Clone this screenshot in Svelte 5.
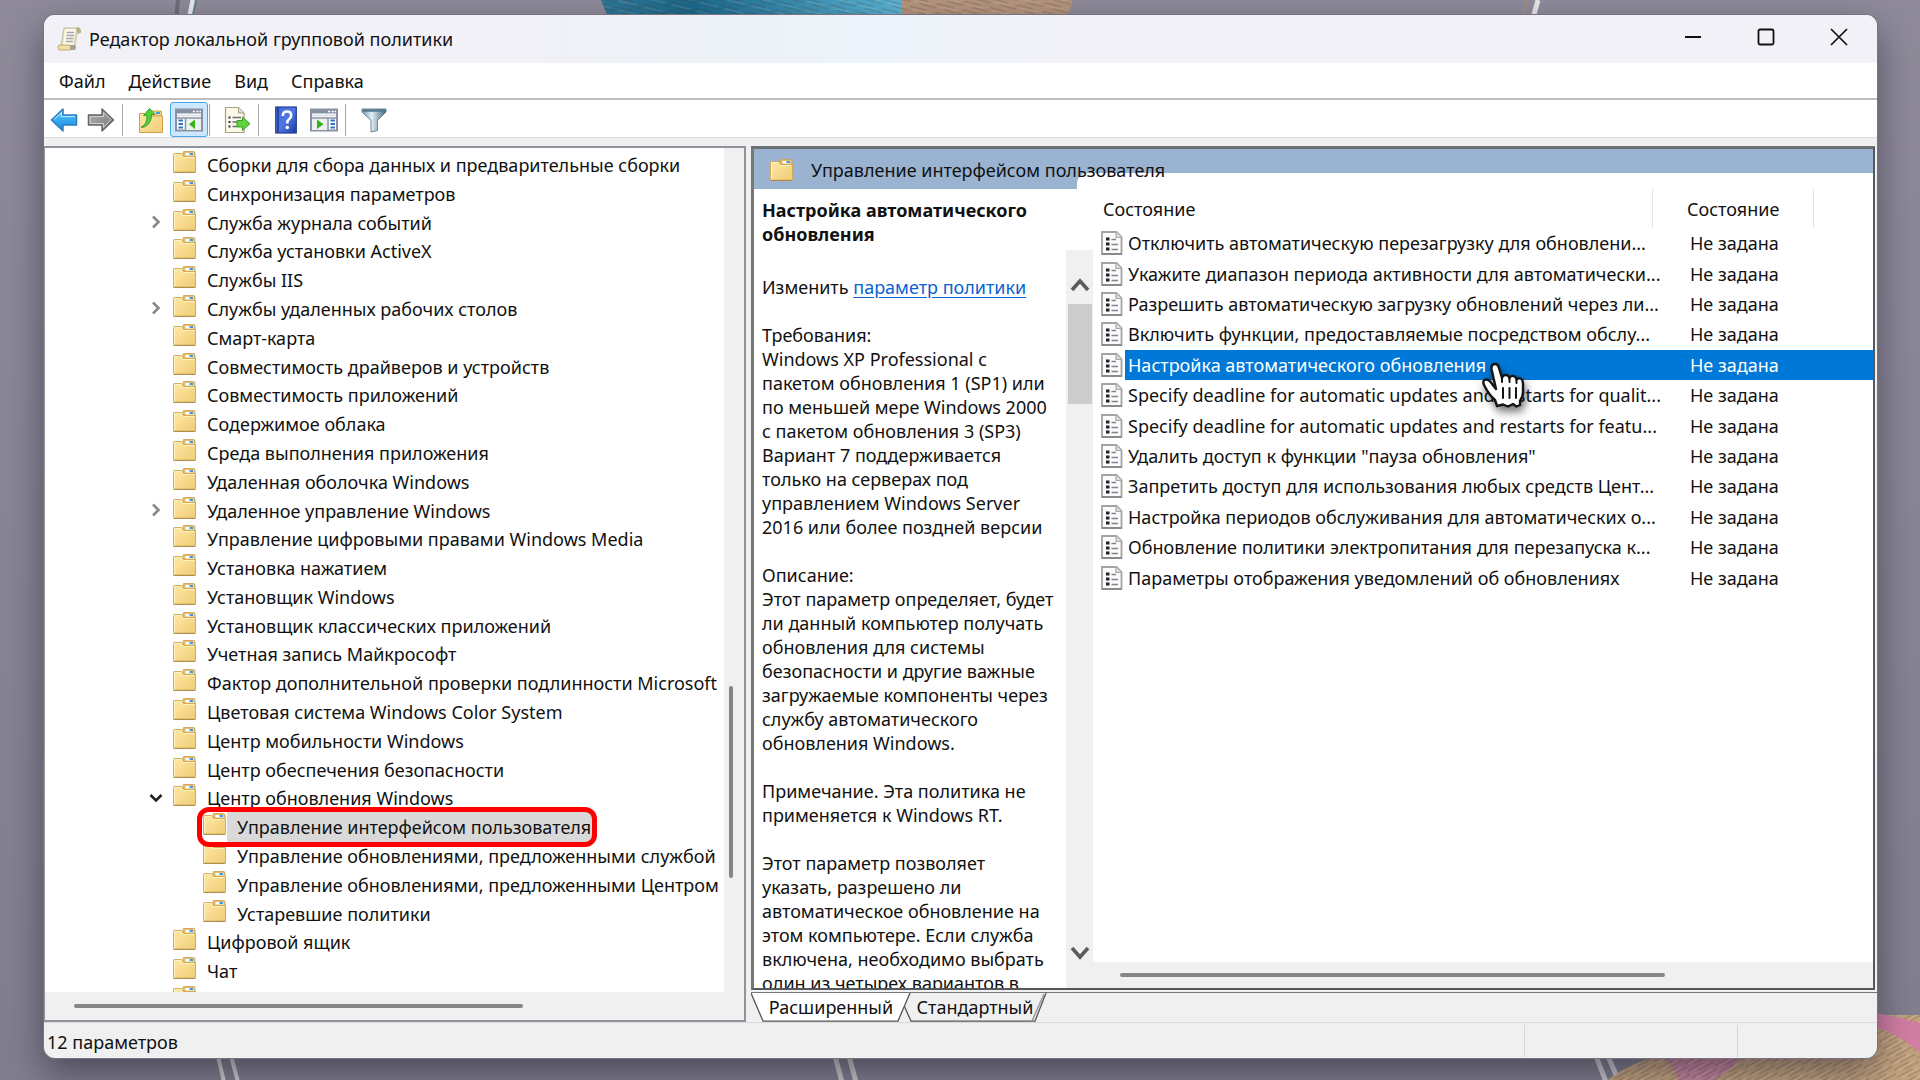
<script>
  const tree = [
    { name: 'Сборки для сбора данных и предварительные сборки' },
    { name: 'Синхронизация параметров' },
    { name: 'Служба журнала событий', state: 'closed' },
    { name: 'Служба установки ActiveX' },
    { name: 'Службы IIS' },
    { name: 'Службы удаленных рабочих столов', state: 'closed' },
    { name: 'Смарт-карта' },
    { name: 'Совместимость драйверов и устройств' },
    { name: 'Совместимость приложений' },
    { name: 'Содержимое облака' },
    { name: 'Среда выполнения приложения' },
    { name: 'Удаленная оболочка Windows' },
    { name: 'Удаленное управление Windows', state: 'closed' },
    { name: 'Управление цифровыми правами Windows Media' },
    { name: 'Установка нажатием' },
    { name: 'Установщик Windows' },
    { name: 'Установщик классических приложений' },
    { name: 'Учетная запись Майкрософт' },
    { name: 'Фактор дополнительной проверки подлинности Microsoft' },
    { name: 'Цветовая система Windows Color System' },
    { name: 'Центр мобильности Windows' },
    { name: 'Центр обеспечения безопасности' },
    { name: 'Центр обновления Windows', state: 'open' },
    { name: 'Управление интерфейсом пользователя', child: true, selected: true },
    { name: 'Управление обновлениями, предложенными службой', child: true },
    { name: 'Управление обновлениями, предложенными Центром', child: true },
    { name: 'Устаревшие политики', child: true },
    { name: 'Цифровой ящик' },
    { name: 'Чат' },
    { name: '' }
  ];

  const policies = [
    'Отключить автоматическую перезагрузку для обновлени...',
    'Укажите диапазон периода активности для автоматически...',
    'Разрешить автоматическую загрузку обновлений через ли...',
    'Включить функции, предоставляемые посредством обслу...',
    'Настройка автоматического обновления',
    'Specify deadline for automatic updates and restarts for qualit...',
    'Specify deadline for automatic updates and restarts for featu...',
    'Удалить доступ к функции "пауза обновления"',
    'Запретить доступ для использования любых средств Цент...',
    'Настройка периодов обслуживания для автоматических о...',
    'Обновление политики электропитания для перезапуска к...',
    'Параметры отображения уведомлений об обновлениях'
  ];
  let selected = $state(4);

  const details = `Требования:
Windows XP Professional с
пакетом обновления 1 (SP1) или
по меньшей мере Windows 2000
с пакетом обновления 3 (SP3)
Вариант 7 поддерживается
только на серверах под
управлением Windows Server
2016 или более поздней версии

Описание:
Этот параметр определяет, будет
ли данный компьютер получать
обновления для системы
безопасности и другие важные
загружаемые компоненты через
службу автоматического
обновления Windows.

Примечание. Эта политика не
применяется к Windows RT.

Этот параметр позволяет
указать, разрешено ли
автоматическое обновление на
этом компьютере. Если служба
включена, необходимо выбрать
один из четырех вариантов в`;
</script>

{#snippet folder()}
  <svg class="folder" viewBox="0 0 23 22" aria-hidden="true">
    <path d="M10 5V1.5Q10 .5 11 .5H20.500Q22 .5 22 2V20H10Z" fill="#e5bd68" stroke="#c99f4d" stroke-width=".8" />
    <rect x="12.500" y="2" width="8" height="2.500" fill="#fff" />
    <rect x="16.500" y="2" width="3.500" height="2" fill="#3f9be6" />
    <path d="M.5 3.500Q.5 2.500 1.500 2.500H8.500L10.500 5.500H22.500V20.500Q22.500 21.500 21.500 21.500H1.500Q.5 21.500 .5 20.500Z" fill="url(#folderFill)" stroke="#cda658" stroke-width=".9" />
    <path d="M1.500 20.500V4L2 3.500H8L10 6.500H21.500" fill="none" stroke="#fff3bd" stroke-width="1" />
    <path d="M.5 21.300H22.300" stroke="#a98545" stroke-width="1" />
  </svg>
{/snippet}

{#snippet consoleIcon(flip)}
  <svg width="28" height="24" viewBox="0 0 28 24" aria-hidden="true">
    <rect x="1" y="1.500" width="26" height="21" fill="#fff" stroke="#8992a3" stroke-width="2" />
    <rect x="1" y="1.500" width="26" height="4" fill="#8992a3" />
    <path d="M18 3.500h2M21.500 3.500h2M24.500 3.500h1.500" stroke="#fff" stroke-width="1.500" />
    <path d="M2 7.500H26" stroke="#d7dbe3" stroke-width="1.500" />
    <path d="M1 10H27" stroke="#8992a3" stroke-width="1.500" />
    {#if flip}
      <rect x="2" y="11" width="15" height="11" fill="#eef1f0" />
      <path d="M18 10V22" stroke="#8992a3" stroke-width="1.500" />
      <path d="M20.500 12.500h4.500M20.500 16h4.500M20.500 19.500h4.500" stroke="#3275c4" stroke-width="1.800" />
      <path d="M7 11.500L13.500 16.300L7 21Z" fill="#32b516" />
    {:else}
      <rect x="11" y="11" width="15" height="11" fill="#eef1f0" />
      <path d="M10.500 10V22" stroke="#8992a3" stroke-width="1.500" />
      <path d="M3.500 12.500h4.500M3.500 16h4.500M3.500 19.500h4.500" stroke="#3275c4" stroke-width="1.800" />
      <path d="M20 11.500L14 16.300L20 21Z" fill="#32b516" />
    {/if}
  </svg>
{/snippet}

<svg class="defs" aria-hidden="true">
  <defs>
    <linearGradient id="folderFill" x1="0" y1="0" x2="1" y2="1">
      <stop offset="0" stop-color="#ffe9a6" />
      <stop offset="1" stop-color="#efcb76" />
    </linearGradient>
    <linearGradient id="blueFill" x1="0" y1="0" x2="0" y2="1">
      <stop offset="0" stop-color="#7fd4fb" />
      <stop offset=".5" stop-color="#35aaf0" />
      <stop offset="1" stop-color="#1787d8" />
    </linearGradient>
    <linearGradient id="grayFill" x1="0" y1="0" x2="1" y2="1">
      <stop offset="0" stop-color="#b5b5b5" />
      <stop offset="1" stop-color="#777" />
    </linearGradient>
    <linearGradient id="helpFill" x1="0" y1="0" x2="1" y2="1">
      <stop offset="0" stop-color="#3f66dd" />
      <stop offset=".5" stop-color="#4f79e4" />
      <stop offset="1" stop-color="#1d3aa8" />
    </linearGradient>
    <linearGradient id="funnelFill" x1="0" y1="0" x2="1" y2="0">
      <stop offset="0" stop-color="#6b93ad" />
      <stop offset=".4" stop-color="#e3eff6" />
      <stop offset="1" stop-color="#3f637e" />
    </linearGradient>
  </defs>
</svg>

<div class="desktop">
  <svg class="wallpaper" viewBox="0 0 1920 1080" preserveAspectRatio="none" aria-hidden="true">
    <defs>
      <linearGradient id="wall" x1="0" y1="0" x2="0" y2="1">
        <stop offset="0" stop-color="#8f8b9b" />
        <stop offset="1" stop-color="#817e8d" />
      </linearGradient>
      <linearGradient id="blueWood" x1="0" y1="0" x2="1" y2="0">
        <stop offset="0" stop-color="#2f7896" />
        <stop offset=".3" stop-color="#1a6a8c" />
        <stop offset="1" stop-color="#5cb6d6" />
      </linearGradient>
      <pattern id="grain" width="26" height="9" patternUnits="userSpaceOnUse" patternTransform="rotate(14)">
        <path d="M0 2H17M9 6H26" stroke="#4a2f1d" stroke-opacity=".2" stroke-width="1.500" />
        <path d="M3 4H22" stroke="#fff" stroke-opacity=".18" />
      </pattern>
      <pattern id="grainUp" width="26" height="8" patternUnits="userSpaceOnUse" patternTransform="rotate(-28)">
        <path d="M0 2H17M9 6H26" stroke="#5a3a20" stroke-opacity=".25" stroke-width="1.500" />
        <path d="M3 4H22" stroke="#fff" stroke-opacity=".25" />
      </pattern>
    </defs>
    <rect width="1920" height="1080" fill="url(#wall)" />
    <path d="M601 0L609 20H905V0Z" fill="url(#blueWood)" />
    <path d="M901 0V20H1066L1073 0Z" fill="#b5957c" />
    <path d="M601 0L609 20H1066L1073 0Z" fill="url(#grain)" />
    <path d="M178 0L176 20" stroke="#706d7b" stroke-width="4" />
    <path d="M193 0L189 20" stroke="#e6edee" stroke-width="5" />
    <path d="M196 0L192 20" stroke="#64808c" stroke-width="2" />
    <path d="M1527 0L1523 18" stroke="#a48c84" stroke-width="3" />
    <path d="M1538 0L1533 18" stroke="#e8e6e6" stroke-width="5" />
    <path d="M218 1056L224 1082M231 1056L238 1082" stroke="#d0cfd0" stroke-width="4" />
    <path d="M835 1056L842 1082M849 1056L856 1082" stroke="#c9c8c6" stroke-width="5" />
    <path d="M1596 1056L1606 1082M1608 1056L1619 1082" stroke="#c9c8cc" stroke-width="5" />
    <path d="M1608 1080Q1640 1054 1700 1050L1870 1015H1920V1080Z" fill="#c2a27f" />
    <path d="M1660 1056H1745L1715 1080H1678Q1676 1066 1660 1056Z" fill="#c5869f" />
    <path d="M1608 1080Q1640 1054 1700 1050L1870 1015H1920V1080Z" fill="url(#grainUp)" />
    <path d="M1870 1012Q1902 1018 1920 1023V1053Q1900 1034 1870 1025Z" fill="#d27fa4" />
  </svg>

  <main class="window">
    <header class="titlebar">
      <svg width="26" height="26" viewBox="0 0 26 26" aria-hidden="true">
        <path d="M8 2H23Q25.500 3 24 7H21L18 20H5Z" fill="#e9e2c4" stroke="#b5ae93" stroke-width=".8" />
        <path d="M9 3H20L18 20H7Z" fill="#fbf8e6" />
        <path d="M20 3.500Q20.500 1 23 1.500Q25.500 3 24.500 7H21Z" fill="#b9ae87" />
        <path d="M19.500 6L17.500 20H19.500L21.500 7Z" fill="#d8cfae" />
        <path d="M10.500 6.500H18M10.500 9.500H18M10 12.500H17.500M10 15.500H17" stroke="#a5a4aa" stroke-width="1.600" />
        <path d="M3 19H14Q15.500 21 14.500 24H3Q.5 21.500 3 19Z" fill="#f1dfa2" stroke="#b39f63" stroke-width=".8" />
        <path d="M14 19H19Q21 21 19 24H14.500Z" fill="#a7a18e" />
      </svg>
      <h1>Редактор локальной групповой политики</h1>
      <div class="controls">
        <button aria-label="Свернуть">
          <svg width="18" height="18" viewBox="0 0 18 18"><path d="M1 9H17" stroke="#111" stroke-width="2" /></svg>
        </button>
        <button aria-label="Развернуть">
          <svg width="18" height="18" viewBox="0 0 18 18"><rect x="1.500" y="1.500" width="15" height="15" rx="1.500" fill="none" stroke="#111" stroke-width="1.800" /></svg>
        </button>
        <button aria-label="Закрыть">
          <svg width="18" height="18" viewBox="0 0 18 18"><path d="M1 1L17 17M17 1L1 17" stroke="#111" stroke-width="1.700" /></svg>
        </button>
      </div>
    </header>

    <nav class="menu">
      <button>Файл</button>
      <button>Действие</button>
      <button>Вид</button>
      <button>Справка</button>
    </nav>

    <div class="toolbar">
      <button class="arrow" aria-label="Назад">
        <svg width="28" height="26" viewBox="0 0 28 26"><path d="M1.500 13L13 2V8H26.500V18H13V24Z" fill="url(#blueFill)" stroke="#2a7dc0" stroke-width="1.500" stroke-linejoin="round" /><path d="M4 12.500L11.500 5.500V9.500H25" fill="none" stroke="#b9e8ff" stroke-width="1" /></svg>
      </button>
      <button class="arrow forward" aria-label="Вперёд">
        <svg width="28" height="26" viewBox="0 0 28 26"><path d="M26.500 13L15 2V8H1.500V18H15V24Z" fill="url(#grayFill)" stroke="#666" stroke-width="1.500" stroke-linejoin="round" /><path d="M3 16.500V9.500H16.500V5.500L24 12.500L16.500 20.500V16.500H3" fill="none" stroke="#d2d2d2" stroke-width="1" /></svg>
      </button>
      <span class="sep"></span>
      <button class="up" aria-label="На уровень вверх">
        <svg width="26" height="28" viewBox="0 0 26 28"><path d="M11 8V5H23.500V12H11Z" fill="#f2d184" stroke="#cfa650" /><rect x="18" y="6" width="4" height="2" fill="#3f9be6" /><path d="M1.500 7.500H10L12 10H24.500V26.500H1.500Z" fill="url(#folderFill)" stroke="#c9a04e" /><path d="M3 21C8 19 9 15 8.800 9.500H5.500L11.500 2.500L17 8.500H13.500C14 15 9.500 20.500 4.500 21.500Z" fill="#55ce3c" stroke="#2c9e22" stroke-width=".9" /></svg>
      </button>
      <button class="toggle" aria-label="Дерево консоли" aria-pressed="true">{@render consoleIcon(false)}</button>
      <span class="sep near"></span>
      <button class="export" aria-label="Экспорт списка">
        <svg width="27" height="28" viewBox="0 0 27 28"><path d="M1.500 1.500H14.500L20 7V26.500H1.500Z" fill="#fbf8e8" stroke="#a6a08c" stroke-width="1.200" /><path d="M14.500 1.500V7H20" fill="#e4dfcd" stroke="#a6a08c" /><path d="M4.500 11.500h2M4.500 16h2M4.500 20.500h2" stroke="#333" stroke-width="2" /><path d="M8.500 11.500H17M8.500 16H13M8.500 20.500H13" stroke="#6e6a80" stroke-width="1.500" /><path d="M13 14.500H18.500V11L26 17.800L18.500 24.500V21H13Z" fill="#63d13c" stroke="#3ba324" /></svg>
      </button>
      <span class="sep"></span>
      <button class="help" aria-label="Справка">
        <svg width="22" height="28" viewBox="0 0 22 28"><rect x=".7" y="1" width="20.600" height="26" fill="url(#helpFill)" stroke="#2b3f8e" stroke-width="1.200" /><path d="M3 1V27" stroke="#23368f" stroke-width="1.500" /><path d="M7.800 10Q7.800 5.500 12 5.500Q16.200 5.500 16.200 9.500Q16.200 12 13.800 13.500Q12.300 14.600 12.300 17.500" fill="none" stroke="#fff" stroke-width="2.600" /><circle cx="12.300" cy="21.500" r="1.800" fill="#fff" /></svg>
      </button>
      <button class="pane" aria-label="Панель действий">{@render consoleIcon(true)}</button>
      <span class="sep"></span>
      <button class="filter" aria-label="Фильтр">
        <svg width="26" height="26" viewBox="0 0 26 26"><path d="M1 2H25V5L16.500 13.500V23.500L10 25V13.500L1 5Z" fill="url(#funnelFill)" stroke="#6c8798" stroke-width="1" /><path d="M2 3.500H24" stroke="#54788f" stroke-width="2.500" /></svg>
      </button>
    </div>

    <div class="content">
      <section class="treepane" aria-label="Дерево консоли">
        <ul class="tree">
          {#each tree as node}
            <li class:child={node.child} class:selected={node.selected}>
              <span class="twist">
                {#if node.state === 'closed'}
                  <svg width="14" height="16" viewBox="0 0 14 16"><path d="M4 2.500L9.500 8L4 13.500" fill="none" stroke="#8a8a8a" stroke-width="2.600" /></svg>
                {:else if node.state === 'open'}
                  <svg width="14" height="10" viewBox="0 0 14 10"><path d="M1.500 2L7 7.500L12.500 2" fill="none" stroke="#222" stroke-width="2.600" /></svg>
                {/if}
              </span>
              {@render folder()}
              <span class="label">{node.name}</span>
            </li>
          {/each}
        </ul>
        <div class="vtrack"><span></span></div>
        <div class="htrack"><span></span></div>
      </section>

      <section class="result">
        <div class="frame">
          <div class="banner">
            {@render folder()}
            <h2>Управление интерфейсом пользователя</h2>
          </div>
          <div class="split">
            <article class="info">
              <h3>Настройка автоматического обновления</h3>
              <p class="edit">Изменить <a href="#policy">параметр политики</a></p>
              <p class="details">{details}</p>
            </article>
            <div class="infoscroll">
              <svg width="20" height="16" viewBox="0 0 20 16"><path d="M2 13L10 4L18 13" fill="none" stroke="#5c5c5c" stroke-width="3.600" /></svg>
              <span></span>
              <svg class="down" width="20" height="16" viewBox="0 0 20 16"><path d="M2 3L10 12L18 3" fill="none" stroke="#5c5c5c" stroke-width="3.600" /></svg>
            </div>
            <div class="list">
              <table>
                <thead>
                  <tr><th class="namecol">Состояние</th><th class="statecol">Состояние</th><th></th></tr>
                </thead>
                <tbody>
                  {#each policies as policy, i}
                    <tr class:selected={i === selected} onclick={() => (selected = i)}>
                      <td class="name">
                        <span class="cell">
                          <svg width="22" height="24" viewBox="0 0 22 24" aria-hidden="true"><path d="M1 1H15.500L20.500 6V23H1Z" fill="#fbfbfb" stroke="#a3a3a3" stroke-width="1.800" /><path d="M1 23H20.500" stroke="#888" stroke-width="1.800" /><path d="M15 1V6.500H20.500" fill="#ddd" stroke="#a8a8a8" stroke-width="1.200" /><path d="M5 8h3.500M5 13h3.500M5 18h3.500" stroke="#222" stroke-width="3" /><path d="M10.500 8.500H15M10.500 13.500H17M10.500 18.500H17" stroke="#85809c" stroke-width="1.700" /></svg>
                          <span class="text">{policy}</span>
                        </span>
                      </td>
                      <td class="state">Не задана</td>
                      <td></td>
                    </tr>
                  {/each}
                </tbody>
              </table>
              <div class="listscroll"><span></span></div>
              <svg class="cursor" width="54" height="56" viewBox="0 0 54 56" aria-hidden="true">
                <path d="M17 45L15 39Q9 34 4 24Q2 19 6 18.500Q9 18 12 23L16 28L11.500 8Q11 3.500 14.500 3Q18 2.500 19 7L22 17Q23 13.500 26 14Q28.500 14 29.500 17Q31 14.500 33.500 15Q36 15.500 36.500 18.500Q38 16.500 40.500 17.500Q43 18.500 43 23V31Q43 36 40 40V44L36.500 45.500L33 43L28 45.500L23 43.500Z" fill="#fff" stroke="#151515" stroke-width="2.400" stroke-linejoin="round" />
                <path d="M23 27V37M29.500 27V37M36 27V37M22 16V21M29.500 17V21M36.500 19V22" stroke="#151515" stroke-width="2" stroke-linecap="round" />
              </svg>
            </div>
          </div>
        </div>
        <div class="tabs">
          <button class="tab active">
            <svg viewBox="0 0 160 30" preserveAspectRatio="none" aria-hidden="true"><path d="M0 0L12 29H147L159 0" fill="#fff" stroke="#555" stroke-width="1.300" /></svg>
            <span>Расширенный</span>
          </button>
          <button class="tab">
            <svg viewBox="0 0 144 30" preserveAspectRatio="none" aria-hidden="true"><path d="M1 13L8 29H132L143 0" fill="#f0f0f0" stroke="#555" stroke-width="1.300" /><path d="M129 29L141 1" stroke="#999" stroke-width="1.500" /></svg>
            <span>Стандартный</span>
          </button>
        </div>
      </section>
    </div>

    <footer class="status">
      <span class="count">12 параметров</span>
      <span class="slot wide"></span>
      <span class="slot"></span>
    </footer>
  </main>
</div>

<style>
  :global(body) {
    margin: 0;
  }
  :global(#app) {
    height: 100vh;
  }
  .defs {
    position: absolute;
    width: 0;
    height: 0;
  }
  .desktop {
    position: relative;
    box-sizing: border-box;
    height: 100%;
    padding: 15px 43px 22px 44px;
    display: flex;
    overflow: hidden;
    font: 18px/24px 'Noto Sans', 'Open Sans', sans-serif;
    color: #111;
  }
  .wallpaper {
    position: absolute;
    inset: 0;
    width: 100%;
    height: 100%;
  }
  .window {
    position: relative;
    flex: 1;
    min-width: 0;
    display: flex;
    flex-direction: column;
    background: #f0f0f0;
    border-radius: 11px;
    overflow: hidden;
    box-shadow: 0 0 0 1px #77747f, 0 14px 36px rgba(20, 18, 35, 0.5);
  }
  button {
    font: inherit;
    color: inherit;
    background: none;
    border: 0;
    padding: 0;
    margin: 0;
  }
  svg {
    display: block;
    flex: none;
  }
  h1,
  h2,
  h3,
  p,
  ul {
    margin: 0;
    padding: 0;
    font-size: inherit;
    font-weight: 400;
  }
  .titlebar {
    height: 48px;
    flex: none;
    display: flex;
    align-items: center;
    gap: 7px;
    padding-left: 12px;
    background: linear-gradient(90deg, #f3f1f8 22%, #edf2f7 36%, #edf3fb 46%, #f3f1f8 58%);
  }
  .controls {
    margin-left: auto;
    display: flex;
    align-self: flex-start;
    height: 44px;
    padding-right: 2px;
  }
  .controls button {
    width: 73px;
    display: flex;
    align-items: center;
    justify-content: center;
  }
  .menu {
    height: 34px;
    flex: none;
    display: flex;
    align-items: center;
    gap: 23px;
    padding: 1px 15px 0;
    background: #fff;
    border-bottom: 2px solid #bcbfc2;
    box-sizing: content-box;
  }
  .toolbar {
    height: 35px;
    flex: none;
    display: flex;
    align-items: center;
    padding: 2px 0 0 6px;
    background: #fff;
    border-bottom: 1px solid #dcdcdc;
  }
  .sep {
    width: 1px;
    height: 32px;
    background: #a5a5a5;
  }
  .arrow {
    margin-right: 9px;
  }
  .arrow.forward {
    margin-right: 7px;
  }
  .up {
    margin: 0 6px 0 15px;
  }
  .toggle {
    box-sizing: border-box;
    width: 38px;
    height: 35px;
    display: flex;
    align-items: center;
    justify-content: center;
    background: #cce8ff;
    border: 1px solid #4ba6e8;
    border-radius: 3px;
  }
  .sep.near {
    margin: 0 14px 0 1px;
  }
  .export {
    margin-right: 7px;
  }
  .help {
    margin: 0 13px 0 16px;
  }
  .pane {
    margin-right: 7px;
  }
  .filter {
    margin-left: 15px;
  }
  .content {
    flex: 1;
    min-height: 0;
    display: flex;
    gap: 5px;
    padding-top: 8px;
  }
  .treepane {
    flex: 0 0 702px;
    box-sizing: border-box;
    min-width: 0;
    display: grid;
    grid-template-columns: 1fr 20px;
    grid-template-rows: 1fr 28px;
    border: 2px solid #8e929a;
    border-width: 2px 2px 2px 1px;
    background: #f0f0f0;
  }
  .tree {
    min-width: 0;
    overflow: hidden;
    background: #fff;
    list-style: none;
    display: grid;
    grid-template-rows: repeat(29, minmax(0, 1fr)) 6px;
    padding-top: 3px;
  }
  .tree li {
    position: relative;
    display: flex;
    min-height: 0;
    padding-left: 104px;
    white-space: nowrap;
  }
  .tree li.child {
    padding-left: 134px;
  }
  .twist {
    width: 24px;
    height: 27px;
    flex: none;
    display: flex;
    align-items: center;
  }
  .tree .folder {
    margin-right: 11px;
  }
  .folder {
    width: 23px;
    height: 22px;
  }
  .label {
    line-height: 28px;
  }
  .tree li.selected::before {
    content: '';
    position: absolute;
    left: 158px;
    top: -1px;
    width: 390px;
    bottom: 0;
    background: linear-gradient(90deg, #fff 24px, #d9d9d9 24px);
  }
  .tree li.selected > * {
    position: relative;
  }
  .tree li.selected::after {
    content: '';
    position: absolute;
    z-index: 2;
    box-sizing: border-box;
    left: 152px;
    top: -6px;
    width: 400px;
    bottom: -5px;
    border: 5px solid #f00;
    border-radius: 12px;
  }
  .vtrack {
    display: flex;
    align-items: flex-end;
    padding: 0 0 114px 5px;
  }
  .vtrack span {
    width: 4px;
    height: 192px;
    border-radius: 2px;
    background: #868686;
  }
  .htrack {
    grid-column: 1 / -1;
    display: flex;
    align-items: center;
    padding-left: 29px;
  }
  .htrack span {
    width: 449px;
    height: 4px;
    border-radius: 2px;
    background: #868686;
  }
  .result {
    flex: 1;
    min-width: 0;
    display: flex;
    flex-direction: column;
  }
  .frame {
    flex: 1;
    min-height: 0;
    display: flex;
    flex-direction: column;
    border: 2px solid #55585c;
    border-width: 3px 2px 2px 3px;
    border-top-color: #6b7075;
    border-left-color: #777;
    margin-right: 2px;
    background: #fff;
  }
  .banner {
    position: relative;
    box-sizing: border-box;
    height: 40px;
    flex: none;
    display: flex;
    align-items: center;
    gap: 18px;
    padding: 2px 0 0 16px;
    background: #99b3d1;
  }
  .banner::after {
    content: '';
    position: absolute;
    left: 323px;
    right: 0;
    bottom: 0;
    height: 16px;
    border-radius: 10px 0 0 0;
    background: #fff;
  }
  .banner h2 {
    position: relative;
    z-index: 1;
  }
  .split {
    flex: 1;
    min-height: 0;
    display: flex;
  }
  .info {
    flex: 0 0 312px;
    box-sizing: border-box;
    padding: 9px 0 0 8px;
    overflow: hidden;
  }
  .info h3 {
    font-weight: 700;
  }
  .edit {
    margin: 29px 0 24px;
  }
  .edit a {
    color: #0a63cf;
    text-underline-offset: 3px;
  }
  .details {
    white-space: pre;
  }
  .infoscroll {
    width: 27px;
    flex: none;
    box-sizing: border-box;
    margin-top: 61px;
    padding: 27px 0 27px;
    display: flex;
    flex-direction: column;
    align-items: center;
    background: #f0f0f0;
  }
  .infoscroll span {
    width: 24px;
    height: 100px;
    margin-top: 11px;
    background: #cdcdcd;
  }
  .infoscroll .down {
    margin-top: auto;
  }
  .list {
    position: relative;
    flex: 1;
    min-width: 0;
    display: flex;
    flex-direction: column;
    justify-content: space-between;
  }
  table {
    width: 100%;
    height: 404px;
    table-layout: fixed;
    border-collapse: separate;
    border-spacing: 0;
  }
  thead tr {
    height: 39px;
  }
  th {
    box-sizing: border-box;
    padding: 0;
    font-weight: 400;
    text-align: left;
  }
  .namecol {
    width: 560px;
    padding-left: 10px;
    border-right: 1px solid #e3e3e3;
  }
  .statecol {
    width: 161px;
    padding-left: 34px;
    border-right: 1px solid #e3e3e3;
  }
  td {
    padding: 0;
    white-space: nowrap;
  }
  .cell {
    display: flex;
    align-items: center;
    padding-left: 8px;
  }
  .text {
    margin-left: 5px;
  }
  .state {
    padding-left: 37px;
  }
  tr.selected td {
    background: #0078d7;
    color: #fff;
  }
  tr.selected .name {
    background: linear-gradient(90deg, #fff 32px, #0078d7 32px);
  }
  .listscroll {
    height: 26px;
    display: flex;
    align-items: center;
    padding-left: 27px;
    background: #f0f0f0;
  }
  .listscroll span {
    width: 545px;
    height: 4px;
    border-radius: 2px;
    background: #868686;
  }
  .cursor {
    position: absolute;
    left: 387px;
    top: 172px;
    filter: drop-shadow(2px 5px 4px rgba(0, 0, 0, 0.55));
  }
  .tabs {
    height: 29px;
    flex: none;
    display: flex;
    margin-top: 2px;
    border-top: 1px solid #777;
  }
  .tab {
    position: relative;
    width: 160px;
    height: 29px;
    line-height: 29px;
    text-align: center;
  }
  .tab + .tab {
    width: 144px;
    margin-left: -8px;
  }
  .tab svg {
    position: absolute;
    inset: 0;
    width: 100%;
    height: 100%;
  }
  .tab span {
    position: relative;
  }
  .tab.active {
    z-index: 1;
  }
  .status {
    height: 36px;
    flex: none;
    display: flex;
    align-items: stretch;
    padding: 2px 3px 1px 3px;
    border-top: 1px solid #dadada;
    box-sizing: border-box;
  }
  .count {
    flex: 1;
    line-height: 34px;
  }
  .slot {
    width: 136px;
    border-left: 1px solid #d5d5d5;
  }
  .slot.wide {
    width: 212px;
  }
</style>
